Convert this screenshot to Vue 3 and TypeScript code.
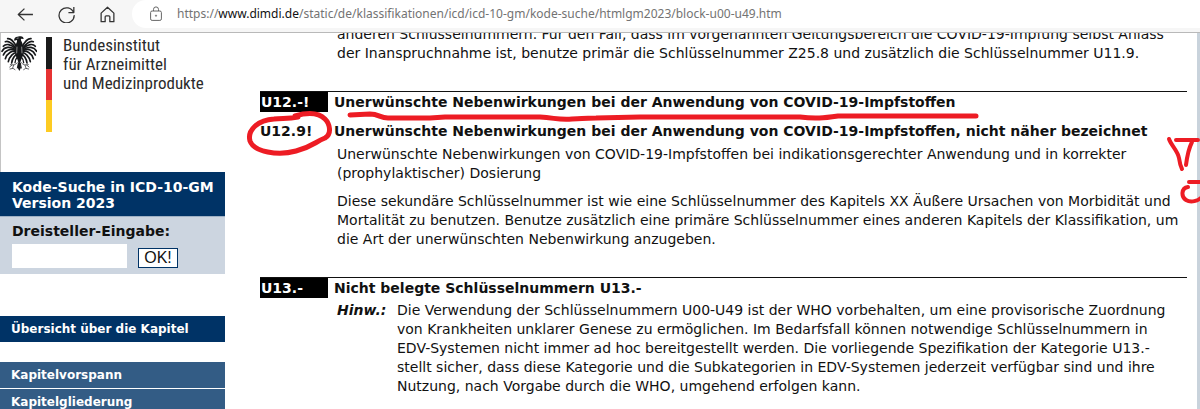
<script setup lang="ts">
interface Entry {
  code: string
  title: string
  heading: boolean
  paragraphs: string[][]
  note?: string[]
}

const intro: string[] = [
  'anderen Schlüsselnummern. Für den Fall, dass im vorgenannten Geltungsbereich die COVID-19-Impfung selbst Anlass',
  'der Inanspruchnahme ist, benutze primär die Schlüsselnummer Z25.8 und zusätzlich die Schlüsselnummer U11.9.',
]

const entries: Entry[] = [
  {
    code: 'U12.-!',
    title: 'Unerwünschte Nebenwirkungen bei der Anwendung von COVID-19-Impfstoffen',
    heading: true,
    paragraphs: [],
  },
  {
    code: 'U12.9!',
    title: 'Unerwünschte Nebenwirkungen bei der Anwendung von COVID-19-Impfstoffen, nicht näher bezeichnet',
    heading: false,
    paragraphs: [
      [
        'Unerwünschte Nebenwirkungen von COVID-19-Impfstoffen bei indikationsgerechter Anwendung und in korrekter',
        '(prophylaktischer) Dosierung',
      ],
      [
        'Diese sekundäre Schlüsselnummer ist wie eine Schlüsselnummer des Kapitels XX Äußere Ursachen von Morbidität und',
        'Mortalität zu benutzen. Benutze zusätzlich eine primäre Schlüsselnummer eines anderen Kapitels der Klassifikation, um',
        'die Art der unerwünschten Nebenwirkung anzugeben.',
      ],
    ],
  },
  {
    code: 'U13.-',
    title: 'Nicht belegte Schlüsselnummern U13.-',
    heading: true,
    paragraphs: [],
    note: [
      'Die Verwendung der Schlüsselnummern U00-U49 ist der WHO vorbehalten, um eine provisorische Zuordnung',
      'von Krankheiten unklarer Genese zu ermöglichen. Im Bedarfsfall können notwendige Schlüsselnummern in',
      'EDV-Systemen nicht immer ad hoc bereitgestellt werden. Die vorliegende Spezifikation der Kategorie U13.-',
      'stellt sicher, dass diese Kategorie und die Subkategorien in EDV-Systemen jederzeit verfügbar sind und ihre',
      'Nutzung, nach Vorgabe durch die WHO, umgehend erfolgen kann.',
    ],
  },
]

const chapters: string[] = ['Kapitelvorspann', 'Kapitelgliederung']
</script>

<template>
  <div class="browser">
    <header class="toolbar">
      <button type="button" class="tool" aria-label="Zurück">
        <svg viewBox="0 0 16 16"><path d="M15 8H1.500M7 2.500L1.200 8l5.800 5.500" /></svg>
      </button>
      <button type="button" class="tool" aria-label="Aktualisieren">
        <svg viewBox="0 0 16 16"><path d="M14.700 6.200A7.100 7.100 0 1 0 15.200 8.600M14.900 1v5.200H9.800" /></svg>
      </button>
      <button type="button" class="tool" aria-label="Startseite">
        <svg viewBox="0 0 16 16"><path d="M2 6.700L8 1.200l6 5.500v8.100h-3.800v-4.600a1 1 0 0 0-1-1H6.800a1 1 0 0 0-1 1v4.600H2z" /></svg>
      </button>
      <div class="address">
        <svg class="lock" viewBox="0 0 14 16">
          <rect x="1.600" y="5" width="10.800" height="9.400" rx="1.500" />
          <path d="M4.500 5V3.400a2.500 2.500 0 0 1 5 0V5" />
          <circle cx="7" cy="9.700" r="0.600" />
        </svg>
        <span class="url">https://<b>www.dimdi.de</b>/static/de/klassifikationen/icd/icd-10-gm/kode-suche/htmlgm2023/block-u00-u49.htm</span>
      </div>
    </header>

    <div class="page">
      <aside class="sidebar">
        <div class="brand">
          <svg class="eagle" viewBox="0 0 108 108">
            <g fill="none" stroke="#16181a" stroke-linecap="round">
              <g id="wing">
                <path stroke-width="5" d="M46 32C38 16 30 7 20 8" />
                <path stroke-width="5" d="M44 35C32 20 22 13 13 17" />
                <path stroke-width="5" d="M44 38C30 24 14 22 7 31" />
                <path stroke-width="5" d="M44 41C28 30 10 32 3 46" />
                <path stroke-width="5" d="M44 44C30 36 13 42 7 57" />
                <path stroke-width="5" d="M46 47C34 42 18 52 13 68" />
                <path stroke-width="5" d="M47 50C38 49 25 62 22 77" />
                <path stroke-width="5" d="M49 54C42 56 33 69 32 81" />
                <path stroke-width="4" d="M50 62C46 66 42 74 42 80" />
                <path stroke-width="2" d="M49 80C43 87 38 88 28 86M38 88l-3 8M33 87l-7 6M27 99l9-2 6 4" />
                <path stroke-width="3" d="M52 82l-3 14" />
              </g>
              <use href="#wing" transform="matrix(-1 0 0 1 110 0)" />
            </g>
            <path fill="#16181a" d="M55 1c8-2 13 2 13 8l-8-1c-2 6 5 11 6 20l1 28-6 14-3 9 2 16-5 10-5-10 2-16-3-9-6-14 1-28c1-7 5-9 4-16l-8 2c-2-6 2-11 9-12l6-1z" />
            <path fill="none" stroke="#fff" stroke-width="1.500" d="M47 7l6-1M48 32l-1 20M62 32l1 20" />
          </svg>
          <div class="flag"><i class="black"></i><i class="red"></i><i class="gold"></i></div>
          <div class="institute">Bundesinstitut<br />für Arzneimittel<br />und Medizinprodukte</div>
        </div>

        <h1 class="search-title">Kode-Suche in ICD-10-GM<br />Version 2023</h1>
        <form class="search" @submit.prevent>
          <label for="code">Dreisteller-Eingabe:</label>
          <div class="search-row">
            <input id="code" type="text" />
            <button type="submit">OK!</button>
          </div>
        </form>

        <nav class="nav">
          <a class="overview" href="#">Übersicht über die Kapitel</a>
          <a v-for="chapter in chapters" :key="chapter" class="chapter" href="#">{{ chapter }}</a>
        </nav>
      </aside>

      <main class="content">
        <p class="intro"><span v-for="line in intro" :key="line">{{ line }}</span></p>
        <section v-for="entry in entries" :key="entry.code" class="entry">
          <h2 :class="['row', { ruled: entry.heading }]">
            <span class="code">{{ entry.code }}</span>
            <span class="title">{{ entry.title }}</span>
          </h2>
          <p v-for="(lines, i) in entry.paragraphs" :key="i" class="text">
            <span v-for="line in lines" :key="line">{{ line }}</span>
          </p>
          <div v-if="entry.note" class="note">
            <em>Hinw.:</em>
            <p><span v-for="line in entry.note" :key="line">{{ line }}</span></p>
          </div>
        </section>
      </main>
      <div class="edge"></div>

      <svg class="ink" width="1200" height="376" viewBox="0 33 1200 376">
        <path d="M350 115L370 114C379 114 380 118 388 118L430 118L445 117L540 117C556 118 558 120 572 119C584 119 580 118 596 118L640 117L800 117C815 119 824 118 838 116L976 116" />
        <path d="M298 117C288 119 282 118 274 119C258 120 247 130 250 141C254 152 278 156 296 151C312 147 315 142 325 138C332 134 330 124 325 119C317 111 302 114 295 116" />
        <path class="thin" d="M1169 139C1171 145 1178 151 1179 158C1180 165 1181 167 1182 169M1176 140H1198M1192 142C1189 148 1187 157 1186 165" />
        <path class="thin" d="M1189 182H1202M1188 187C1181 188 1181 197 1186 200C1191 203 1198 201 1202 197" />
      </svg>
    </div>
  </div>
</template>

<style>
body {
  margin: 0;
  background: #fff;
}
</style>

<style scoped>
.browser {
  display: flex;
  flex-direction: column;
  height: 100vh;
  overflow: hidden;
  font-family: "DejaVu Sans", Verdana, sans-serif;
  color: #111;
}
.toolbar {
  flex: none;
  display: flex;
  align-items: flex-start;
  gap: 24px;
  height: 32px;
  padding-left: 17px;
  background: #f6f6f6;
}
.tool {
  width: 17px;
  height: 29px;
  padding: 0;
  border: 0;
  background: none;
  display: flex;
  align-items: center;
}
.tool svg {
  width: 17px;
  height: 17px;
  fill: none;
  stroke: #333;
  stroke-width: 1.2;
  stroke-linejoin: round;
}
.address {
  flex: 1;
  display: flex;
  align-items: center;
  gap: 14px;
  height: 28px;
  margin-left: -8px;
  padding-left: 17px;
  background: #fff;
  border-radius: 14px 0 0 14px;
}
.lock {
  width: 14px;
  height: 16px;
  fill: none;
  stroke: #666;
}
.url {
  font: 12px/30px "Noto Sans", sans-serif;
  color: #737373;
  white-space: nowrap;
}
.url b {
  font-weight: 400;
  color: #111;
}
.page {
  position: relative;
  flex: 1;
  display: flex;
  min-height: 0;
  overflow: hidden;
  border-top: 1px solid #b9b9b9;
}
.sidebar {
  flex: none;
  width: 225px;
}
.brand {
  display: flex;
  align-items: flex-start;
  height: 136px;
  padding-top: 3px;
  border-left: 1px solid #c4c4c4;
}
.eagle {
  flex: none;
  width: 36px;
  height: 36px;
}
.flag {
  display: flex;
  flex-direction: column;
  width: 6px;
  height: 95px;
  margin: 1px 11px 0 9px;
}
.flag i {
  flex: 1;
}
.black { background: #1a1a1a; }
.red { background: #e63232; }
.gold { background: #fdcb22; }
.institute {
  font: 17px/19px "Liberation Sans Narrow", "Roboto Condensed", sans-serif;
  color: #2b2b2b;
  white-space: nowrap;
}
.search-title {
  margin: 0;
  padding: 7px 12px 5px;
  font-size: 14px;
  line-height: 16px;
  white-space: nowrap;
  color: #fff;
  background: #003366;
  border-bottom: 1px solid #9fb1c5;
}
.search {
  padding: 5px 12px 6px;
  background: #ccd5e0;
}
.search label {
  display: block;
  font-size: 14px;
  font-weight: 700;
  line-height: 18px;
}
.search-row {
  display: flex;
  align-items: flex-end;
  gap: 11px;
  padding-top: 4px;
}
.search input {
  box-sizing: border-box;
  width: 115px;
  height: 24px;
  border: 0;
  padding: 0 4px;
  background: #fff;
}
.search button {
  box-sizing: border-box;
  width: 40px;
  height: 20px;
  padding: 0;
  border: 1px solid #003366;
  background: #fff;
  color: #111;
  font: 16px/16px "Liberation Sans", Arial, sans-serif;
}
.nav {
  display: flex;
  flex-direction: column;
  gap: 1px;
  padding-top: 42px;
}
.nav a {
  padding-left: 11px;
  font-size: 12px;
  font-weight: 700;
  line-height: 26px;
  color: #fff;
  text-decoration: none;
  white-space: nowrap;
}
.nav .overview {
  margin-bottom: 19px;
  background: #003366;
}
.nav .chapter {
  background: #335c85;
}
.content {
  flex: 1;
  min-width: 0;
  padding: 0 10px 0 35px;
  font-size: 14px;
  line-height: 19px;
  white-space: nowrap;
}
.content p {
  margin: 0;
}
.content p span {
  display: block;
}
.content .intro {
  margin: -8px 0 28px;
  padding-left: 77px;
}
.row {
  display: flex;
  gap: 6px;
  margin: 0 0 9px;
  font-size: 14px;
  line-height: 20px;
}
.row .code {
  flex: none;
  width: 68px;
}
.row.ruled {
  border-top: 1px solid #111;
}
.ruled .code {
  box-sizing: border-box;
  padding-left: 1px;
  color: #fff;
  background: #000;
}
.row:not(.ruled) {
  margin-bottom: 4px;
}
.text {
  padding-left: 77px;
}
.content .text + .text {
  margin: 9px 0 28px;
}
.note {
  display: flex;
  margin-top: -6px;
  padding-left: 77px;
}
.note em {
  flex: none;
  width: 60px;
  font-weight: 700;
}
.edge {
  flex: none;
  width: 3px;
  background: #c9d3dc;
}
.ink {
  position: absolute;
  top: 0;
  left: 0;
  fill: none;
  stroke: #ed1c24;
  stroke-width: 5;
  stroke-linecap: round;
  stroke-linejoin: round;
  pointer-events: none;
}
.ink .thin {
  stroke-width: 4;
}
</style>
